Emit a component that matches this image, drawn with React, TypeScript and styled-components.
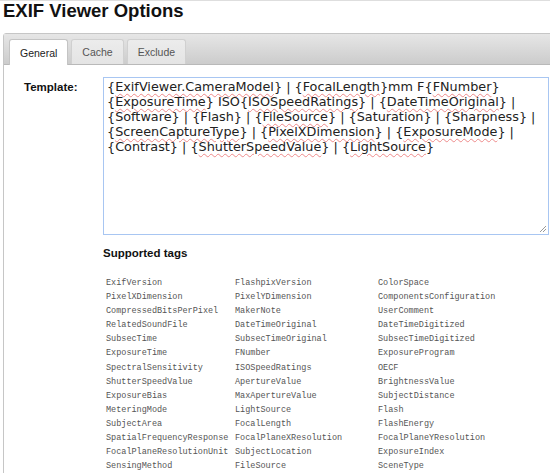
import React from "react";
import styled, { createGlobalStyle } from "styled-components";

const GlobalStyle = createGlobalStyle`
  html, body {
    margin: 0;
    padding: 0;
    background: #fff;
    overflow: hidden;
  }
  body {
    width: 550px;
    height: 473px;
    font-family: "Liberation Sans", Arial, sans-serif;
    color: #222;
  }
`;

const Page = styled.div`
  border-top: 1px solid #dedede;
  padding: 0 0 0 3px;
`;

const Title = styled.h1`
  margin: 0;
  font-size: 18.5px;
  line-height: 20px;
  font-weight: bold;
  color: #111;
`;

const TabsBox = styled.div`
  margin-top: 12px;
  width: 580px;
  height: 460px;
  border: 1px solid #c6c6c6;
  border-radius: 3px;
  background: #fff;
`;

const TabBar = styled.div`
  display: flex;
  align-items: flex-end;
  gap: 3px;
  height: 30px;
  padding: 0 5px;
  background: linear-gradient(#e6e6e6, #d9d9d9 50%, #cccccc);
  border-bottom: 1px solid #b9b9b9;
`;

const Tab = styled.div<{ $active?: boolean }>`
  height: ${(p) => (p.$active ? "25px" : "24px")};
  margin-bottom: ${(p) => (p.$active ? "-1px" : "0")};
  padding: 0 10px;
  display: flex;
  align-items: center;
  font-size: 10.5px;
  color: ${(p) => (p.$active ? "#222" : "#555")};
  background: ${(p) =>
    p.$active ? "#fff" : "linear-gradient(#ececec, #e4e4e4)"};
  border: 1px solid ${(p) => (p.$active ? "#c4c4c4" : "#d0d0d0")};
  border-bottom: none;
  border-radius: 3px 3px 0 0;
`;

const Body = styled.div`
  padding: 12px 0 0 0;
`;

const FieldRow = styled.div`
  display: grid;
  grid-template-columns: 99px 446px;
`;

const Label = styled.div`
  padding: 4px 0 0 20px;
  font-size: 11.5px;
  font-weight: bold;
  color: #111;
`;

const TextBox = styled.div`
  position: relative;
  box-sizing: border-box;
  height: 158px;
  padding: 1px 3px;
  border: 1px solid #a8c6f2;
  font-family: "DejaVu Sans", Verdana, sans-serif;
  font-size: 12.8px;
  line-height: 15px;
  color: #222;
  overflow: hidden;
`;

const Line = styled.div`
  white-space: nowrap;
`;

const Misspelled = styled.span`
  text-decoration: underline wavy #ee8a8a;
  text-decoration-thickness: 1px;
  text-underline-offset: 2px;
`;

const Grip = styled.svg`
  position: absolute;
  right: 1px;
  bottom: 1px;
`;

const Section = styled.div`
  padding: 12px 0 0 99px;
`;

const SectionTitle = styled.div`
  font-size: 11.5px;
  font-weight: bold;
  color: #111;
  margin-bottom: 17px;
`;

const TagGrid = styled.div`
  display: grid;
  grid-template-columns: 129px 143px 160px;
  padding-left: 3px;
  font-family: "Liberation Mono", "Courier New", monospace;
  font-size: 8.5px;
  line-height: 14.1px;
  color: #555;
`;

const Tag = styled.div`
  white-space: nowrap;
`;

type Seg = string | { bad: string };

const lines: Seg[][] = [
  ["{", { bad: "ExifViewer.CameraModel" }, "} | {", { bad: "FocalLength" }, "}mm F{", { bad: "FNumber" }, "}"],
  ["{", { bad: "ExposureTime" }, "} ISO{", { bad: "ISOSpeedRatings" }, "} | {", { bad: "DateTimeOriginal" }, "} |"],
  ["{Software} | {Flash} | {", { bad: "FileSource" }, "} | {Saturation} | {Sharpness} |"],
  ["{", { bad: "ScreenCaptureType" }, "} | {", { bad: "PixelXDimension" }, "} | {", { bad: "ExposureMode" }, "} |"],
  ["{Contrast} | {", { bad: "ShutterSpeedValue" }, "} | {", { bad: "LightSource" }, "}"],
];

const tags = [
  "ExifVersion", "FlashpixVersion", "ColorSpace",
  "PixelXDimension", "PixelYDimension", "ComponentsConfiguration",
  "CompressedBitsPerPixel", "MakerNote", "UserComment",
  "RelatedSoundFile", "DateTimeOriginal", "DateTimeDigitized",
  "SubsecTime", "SubsecTimeOriginal", "SubsecTimeDigitized",
  "ExposureTime", "FNumber", "ExposureProgram",
  "SpectralSensitivity", "ISOSpeedRatings", "OECF",
  "ShutterSpeedValue", "ApertureValue", "BrightnessValue",
  "ExposureBias", "MaxApertureValue", "SubjectDistance",
  "MeteringMode", "LightSource", "Flash",
  "SubjectArea", "FocalLength", "FlashEnergy",
  "SpatialFrequencyResponse", "FocalPlaneXResolution", "FocalPlaneYResolution",
  "FocalPlaneResolutionUnit", "SubjectLocation", "ExposureIndex",
  "SensingMethod", "FileSource", "SceneType",
];

export default function App() {
  return (
    <>
      <GlobalStyle />
      <Page>
        <Title>EXIF Viewer Options</Title>
        <TabsBox>
          <TabBar>
            <Tab $active>General</Tab>
            <Tab>Cache</Tab>
            <Tab>Exclude</Tab>
          </TabBar>
          <Body>
            <FieldRow>
              <Label>Template:</Label>
              <TextBox role="textbox" aria-multiline="true">
                {lines.map((line, i) => (
                  <Line key={i}>
                    {line.map((seg, j) =>
                      typeof seg === "string" ? (
                        <React.Fragment key={j}>{seg}</React.Fragment>
                      ) : (
                        <Misspelled key={j}>{seg.bad}</Misspelled>
                      )
                    )}
                  </Line>
                ))}
                <Grip width="9" height="9" viewBox="0 0 9 9">
                  <path d="M8 2 L2 8 M8 5 L5 8" stroke="#999" strokeWidth="1" />
                </Grip>
              </TextBox>
            </FieldRow>
            <Section>
              <SectionTitle>Supported tags</SectionTitle>
              <TagGrid>
                {tags.map((t, i) => (
                  <Tag key={i}>{t}</Tag>
                ))}
              </TagGrid>
            </Section>
          </Body>
        </TabsBox>
      </Page>
    </>
  );
}
